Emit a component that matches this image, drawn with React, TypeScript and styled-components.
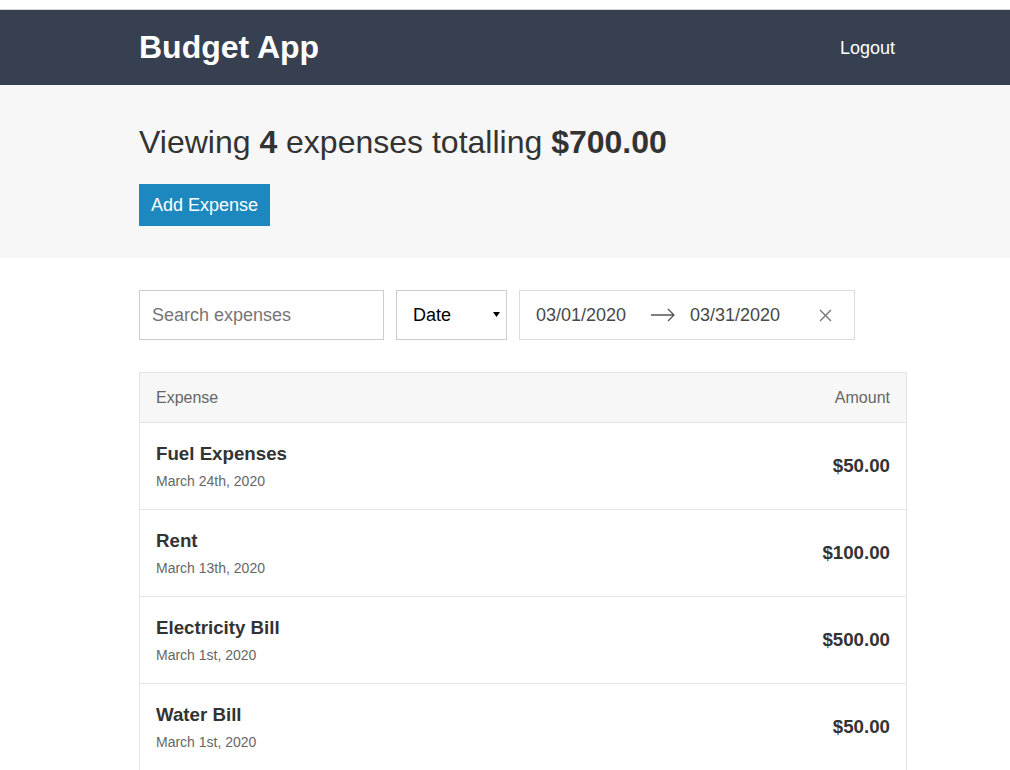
import React from "react";
import styled, { createGlobalStyle } from "styled-components";

const GlobalStyle = createGlobalStyle`
  * { box-sizing: border-box; }
  html, body { margin: 0; padding: 0; background: #fff; }
  body {
    font-family: "Liberation Sans", Arial, Helvetica, sans-serif;
    font-size: 16px;
    line-height: 1.6;
    color: #333;
  }
`;

const TopStrip = styled.div`
  height: 10px;
  border-bottom: 1px solid #d6d6d6;
  background: #fff;
`;

const Header = styled.header`
  background: #364051;
  padding: 12px 0;
`;

const Container = styled.div`
  width: 768px;
  margin-left: 139px;
`;

const HeaderContent = styled(Container)`
  display: flex;
  align-items: center;
  justify-content: space-between;
`;

const Brand = styled.h1`
  margin: 0;
  font-size: 32px;
  line-height: 51px;
  font-weight: 700;
  color: #fff;
`;

const LinkButton = styled.button`
  background: none;
  border: none;
  color: #fff;
  font-family: inherit;
  font-size: 18px;
  font-weight: 300;
  line-height: 1;
  padding: 12px;
  cursor: pointer;
`;

const PageHeader = styled.section`
  background: #f7f7f7;
  padding: 32px 0;
  margin-bottom: 32px;
`;

const PageTitle = styled.h1`
  margin: 0 0 16px;
  font-size: 32px;
  line-height: 51px;
  font-weight: 300;
  color: #333;
  strong { font-weight: 700; }
`;

const PrimaryButton = styled.button`
  background: #1c88bf;
  border: none;
  color: #fff;
  font-family: inherit;
  font-size: 18px;
  font-weight: 300;
  line-height: 1;
  padding: 12px;
  display: block;
  cursor: pointer;
`;

const Filters = styled(Container)`
  display: flex;
  gap: 12px;
  margin-bottom: 32px;
`;

const TextInput = styled.input`
  width: 245px;
  height: 50px;
  border: 1px solid #cacccd;
  font-family: inherit;
  font-size: 18px;
  font-weight: 300;
  padding: 12px;
  color: #333;
  outline: none;
  &::placeholder { color: #757575; }
`;

const SelectWrap = styled.div`
  position: relative;
  width: 111px;
  height: 50px;
`;

const Select = styled.select`
  appearance: none;
  -webkit-appearance: none;
  width: 100%;
  height: 100%;
  border: 1px solid #cacccd;
  background: #fff;
  font-family: inherit;
  font-size: 18px;
  color: #000;
  padding: 0 12px 0 16px;
  border-radius: 0;
  outline: none;
`;

const SelectArrow = styled.svg`
  position: absolute;
  right: 7px;
  top: 22px;
  pointer-events: none;
`;

const DateRange = styled.div`
  width: 336px;
  height: 50px;
  border: 1px solid #dbdbdb;
  display: flex;
  align-items: center;
  padding-left: 16px;
`;

const DateInput = styled.input`
  width: 100px;
  border: none;
  background: transparent;
  font-family: inherit;
  font-size: 18px;
  color: #484848;
  padding: 0;
  outline: none;
`;

const ArrowIcon = styled.svg`
  margin: 0 15px 0 15px;
  flex: none;
`;

const ClearButton = styled.button`
  background: none;
  border: none;
  padding: 0;
  margin-left: 29px;
  display: flex;
  cursor: pointer;
`;

const Table = styled(Container)`
  border: 1px solid #e5e5e5;
  border-bottom: none;
`;

const TableHeader = styled.div`
  background: #f7f7f7;
  color: #666;
  display: flex;
  justify-content: space-between;
  padding: 12px 16px;
  line-height: 25px;
  border-bottom: 1px solid #e5e5e5;
`;

const Row = styled.div`
  display: flex;
  justify-content: space-between;
  align-items: center;
  padding: 16px;
  border-bottom: 1px solid #e5e5e5;
`;

const RowTitle = styled.h3`
  margin: 0;
  font-size: 18.72px;
  line-height: 30px;
  font-weight: 700;
  color: #333;
`;

const RowSub = styled.div`
  font-size: 14px;
  line-height: 24px;
  color: #666;
`;

const Amount = styled.h3`
  margin: 0;
  font-size: 18.72px;
  font-weight: 700;
  color: #333;
`;

const expenses = [
  { title: "Fuel Expenses", date: "March 24th, 2020", amount: "$50.00" },
  { title: "Rent", date: "March 13th, 2020", amount: "$100.00" },
  { title: "Electricity Bill", date: "March 1st, 2020", amount: "$500.00" },
  { title: "Water Bill", date: "March 1st, 2020", amount: "$50.00" },
];

export default function App() {
  return (
    <>
      <GlobalStyle />
      <TopStrip />
      <Header>
        <HeaderContent>
          <Brand>Budget App</Brand>
          <LinkButton>Logout</LinkButton>
        </HeaderContent>
      </Header>
      <PageHeader>
        <Container>
          <PageTitle>
            Viewing <strong>4</strong> expenses totalling <strong>$700.00</strong>
          </PageTitle>
          <PrimaryButton>Add Expense</PrimaryButton>
        </Container>
      </PageHeader>
      <Filters>
        <TextInput placeholder="Search expenses" />
        <SelectWrap>
          <Select defaultValue="date">
            <option value="date">Date</option>
            <option value="amount">Amount</option>
          </Select>
          <SelectArrow width="7" height="5" viewBox="0 0 7 5">
            <path d="M0 0 L7 0 L3.5 5 Z" fill="#000" />
          </SelectArrow>
        </SelectWrap>
        <DateRange>
          <DateInput readOnly value="03/01/2020" />
          <ArrowIcon width="24" height="14" viewBox="0 0 24 14">
            <path d="M0 7 H23 M17 1 L23 7 L17 13" stroke="#555" strokeWidth="1.3" fill="none" />
          </ArrowIcon>
          <DateInput readOnly value="03/31/2020" />
          <ClearButton aria-label="Clear dates">
            <svg width="13" height="13" viewBox="0 0 13 13">
              <path d="M1 1 L12 12 M12 1 L1 12" stroke="#777" strokeWidth="1.4" />
            </svg>
          </ClearButton>
        </DateRange>
      </Filters>
      <Table>
        <TableHeader>
          <span>Expense</span>
          <span>Amount</span>
        </TableHeader>
        {expenses.map((e) => (
          <Row key={e.title}>
            <div>
              <RowTitle>{e.title}</RowTitle>
              <RowSub>{e.date}</RowSub>
            </div>
            <Amount>{e.amount}</Amount>
          </Row>
        ))}
      </Table>
    </>
  );
}
